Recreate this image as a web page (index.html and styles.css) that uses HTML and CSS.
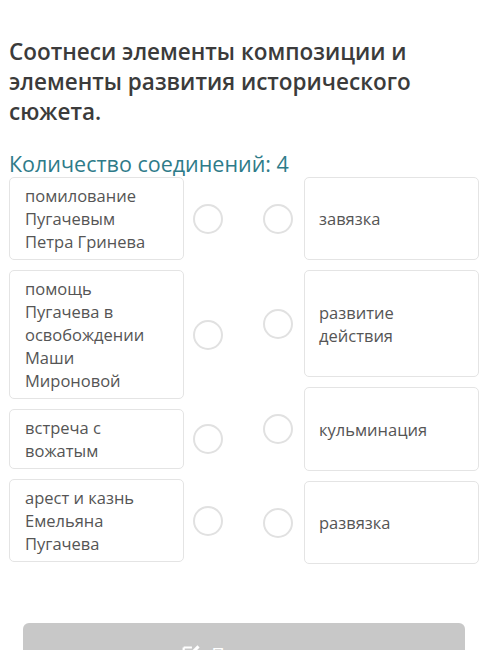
FILE: index.html
```html
<!DOCTYPE html>
<html lang="ru">
<head>
<meta charset="utf-8">
<title>Соотнеси</title>
<link rel="stylesheet" href="styles.css">
</head>
<body>
<main class="page">
  <h1 class="title">Соотнеси элементы композиции и элементы развития исторического сюжета.</h1>
  <p class="count">Количество соединений: 4</p>
  <div class="board">
    <div class="col col-left">
      <div class="item">
        <div class="card">помилование<br>Пугачевым<br>Петра Гринева</div>
        <span class="dot"></span>
      </div>
      <div class="item">
        <div class="card">помощь<br>Пугачева в<br>освобождении<br>Маши<br>Мироновой</div>
        <span class="dot"></span>
      </div>
      <div class="item">
        <div class="card">встреча с<br>вожатым</div>
        <span class="dot"></span>
      </div>
      <div class="item">
        <div class="card">арест и казнь<br>Емельяна<br>Пугачева</div>
        <span class="dot"></span>
      </div>
    </div>
    <div class="col col-right">
      <div class="item">
        <span class="dot"></span>
        <div class="card card-r">завязка</div>
      </div>
      <div class="item">
        <span class="dot"></span>
        <div class="card card-r card-tall">развитие<br>действия</div>
      </div>
      <div class="item">
        <span class="dot"></span>
        <div class="card card-r card-mid">кульминация</div>
      </div>
      <div class="item">
        <span class="dot"></span>
        <div class="card card-r">развязка</div>
      </div>
    </div>
  </div>
  <button class="submit" type="button">
    <svg class="submit-icon" viewBox="0 0 24 24" width="22" height="22" aria-hidden="true">
      <path d="M4 6h9M4 6v14h14v-8" fill="none" stroke="#fff" stroke-width="2.4"/>
      <path d="M11 15l-1 0 0-1 9-9 1 1z" fill="#fff" stroke="#fff" stroke-width="2"/>
    </svg>
    <span>Проверить</span>
  </button>
</main>
</body>
</html>
```

FILE: styles.css
```css
html, body {
  margin: 0;
  padding: 0;
  background: #ffffff;
}

.page {
  font-family: "Open Sans", "Noto Sans", sans-serif;
  padding: 37px 21px 0 9px;
}

.title {
  margin: 0;
  font-size: 22.5px;
  line-height: 30px;
  font-weight: 600;
  color: #3b3b3b;
  width: 420px;
}

.count {
  margin: 24px 0 0 0;
  font-size: 21.5px;
  line-height: 26px;
  color: #2e7b89;
}

.board {
  display: flex;
  gap: 40px;
  margin-top: 0;
}

.col {
  display: flex;
  flex-direction: column;
  gap: 10px;
}

.item {
  display: flex;
  align-items: center;
}

.col-left .item {
  gap: 9px;
}

.col-right .item {
  gap: 11px;
}

.card {
  box-sizing: border-box;
  width: 175px;
  border: 1px solid #e4e4e4;
  border-radius: 5px;
  padding: 6px 10px 6px 15px;
  font-size: 16.5px;
  line-height: 23px;
  color: #555555;
  background: #ffffff;
}

.card-r {
  display: flex;
  align-items: center;
  min-height: 83px;
  padding-left: 14px;
}

.card-tall {
  min-height: 107px;
}

.card-mid {
  min-height: 84px;
}

.dot {
  box-sizing: border-box;
  width: 30px;
  height: 30px;
  flex: none;
  border: 2.5px solid #e1e1e1;
  border-radius: 50%;
}

.submit {
  display: flex;
  align-items: flex-start;
  justify-content: center;
  gap: 10px;
  box-sizing: border-box;
  width: 442px;
  height: 60px;
  margin: 59px 0 0 14px;
  padding: 19px 0 0 0;
  border: none;
  border-radius: 6px;
  background: #c8c8c8;
  color: #ffffff;
  font-family: "Open Sans", "Noto Sans", sans-serif;
  font-size: 18px;
  line-height: 24px;
}

.submit-icon {
  flex: none;
}
```
